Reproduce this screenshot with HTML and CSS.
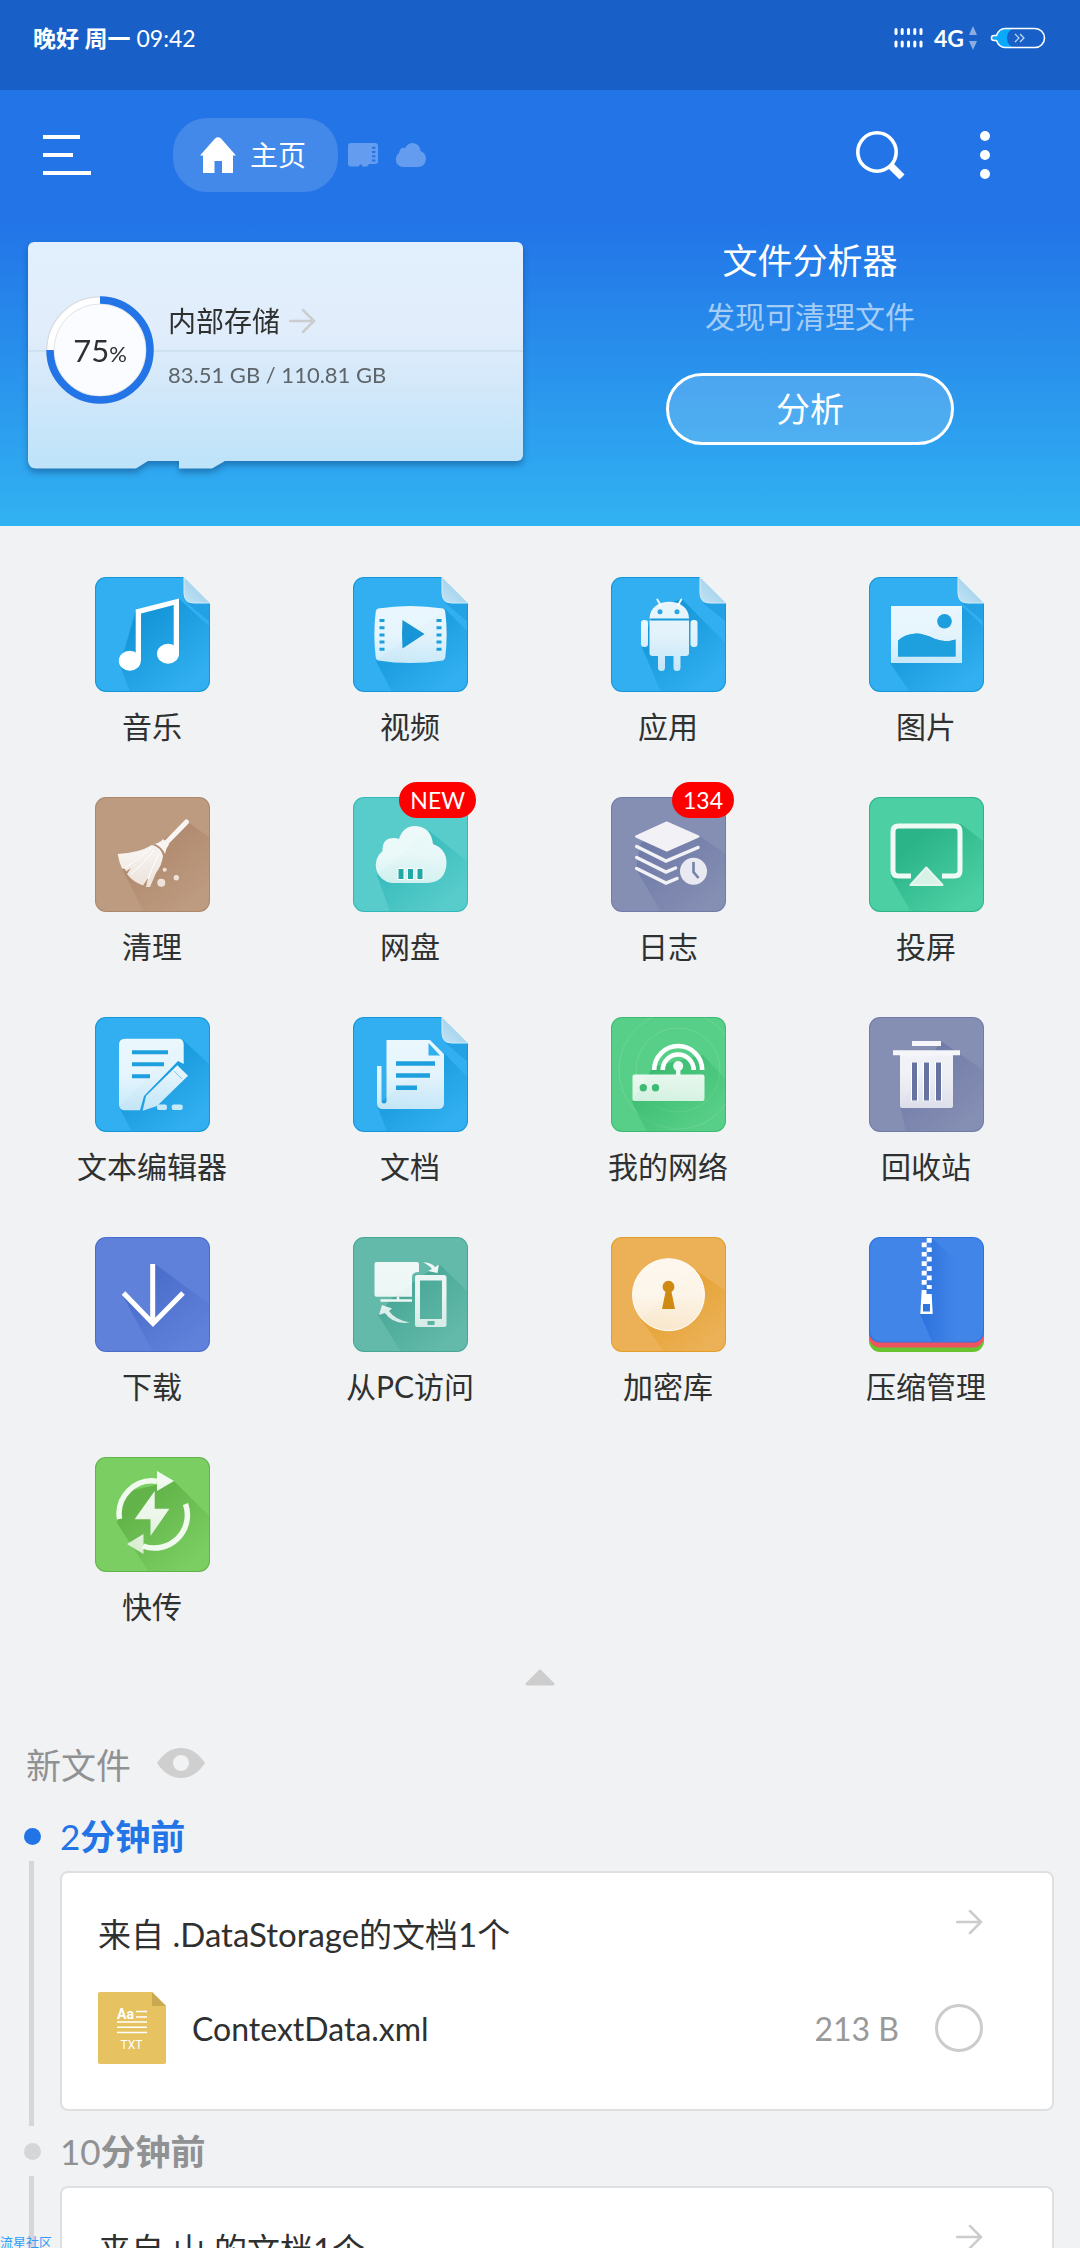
FILE: index.html
```html
<!DOCTYPE html>
<html lang="zh-CN">
<head>
    <meta charset="UTF-8">
    <meta name="viewport" content="width=device-width, initial-scale=1.0">
    <title>主页</title>
    <link rel="stylesheet" href="styles.css">
</head>
<body>
    <!-- Shared icon parts -->
    <svg class="defs" width="0" height="0" aria-hidden="true">
        <defs>
            <linearGradient id="fade-grad" gradientUnits="userSpaceOnUse" x1="45" y1="45" x2="95" y2="105">
                <stop offset="0" stop-color="#fff"/>
                <stop offset="1" stop-color="#fff" stop-opacity="0"/>
            </linearGradient>
            <mask id="fade" maskUnits="userSpaceOnUse" x="0" y="0" width="115" height="115">
                <rect width="115" height="115" fill="url(#fade-grad)"/>
            </mask>
            <linearGradient id="zip-grad" x1="0" y1="0" x2="1" y2="0">
                <stop offset="0" stop-color="#2c72dd"/>
                <stop offset="1" stop-color="#4285e9"/>
            </linearGradient>
            <clipPath id="tile-clip"><rect width="115" height="115" rx="11"/></clipPath>
            <linearGradient id="glass" gradientUnits="userSpaceOnUse" x1="0" y1="25" x2="0" y2="90">
                <stop offset="0" stop-color="#fff" stop-opacity=".9"/>
                <stop offset=".5" stop-color="#fff" stop-opacity=".88"/>
                <stop offset="1" stop-color="#fff" stop-opacity=".74"/>
            </linearGradient>
            <linearGradient id="fold-grad" x1="0" y1="1" x2="1" y2="0">
                <stop offset="0" stop-color="#c4e3f4"/>
                <stop offset="1" stop-color="#8fc8e8"/>
            </linearGradient>
            <symbol id="tile" viewBox="0 0 115 115">
                <rect width="115" height="115" rx="11" fill="var(--shade)"/>
                <rect x="1" y="1" width="113" height="113" rx="10" fill="currentColor"/>
            </symbol>
            <symbol id="tile-fold" viewBox="0 0 115 115">
                <path d="M11 0H89L115 26V104a11 11 0 0 1-11 11H11a11 11 0 0 1-11-11V11A11 11 0 0 1 11 0z" fill="var(--shade)"/>
                <path d="M11 1H88.600L114 26.400V104a10 10 0 0 1-10 10H11a10 10 0 0 1-10-10V11A10 10 0 0 1 11 1z" fill="currentColor"/>
                <path d="M92 26H114V44z" fill="var(--shade)" opacity=".5"/>
                <path d="M89 0V16q0 10 10 10H115z" fill="url(#fold-grad)" stroke="#d5ecf8" stroke-width="1"/>
            </symbol>
            <symbol id="arrow" viewBox="0 0 27 26">
                <path d="M1 13H25M14 2L25 13L14 24" fill="none" stroke="#cbcccc" stroke-width="2.500" stroke-linecap="round"/>
            </symbol>
        </defs>
    </svg>

    <div class="app">
        <header class="status-bar">
            <span class="clock"><b>晚好 周一</b> 09:42</span>
            <span class="status-icons">
                <svg width="30" height="20" viewBox="0 0 30 20" aria-hidden="true">
                    <path d="M2 1.500v4M8.200 1.500v4M14.500 1.500v4M20.800 1.500v4M27 1.500v4M2 14v4M8.200 14v4M14.500 14v4M20.800 14v4M27 14v4" stroke="#fff" stroke-width="3" stroke-linecap="round"/>
                </svg>
                <span class="network">4G</span>
                <svg class="updown" width="8" height="24" viewBox="0 0 8 24" aria-hidden="true">
                    <path d="M4 0L8 9H0zM4 24L8 15H0z" fill="#8bade2"/>
                </svg>
                <svg width="56" height="22" viewBox="0 0 56 22" aria-hidden="true">
                    <path d="M7 8Q9 2 15 2H22Q17 5 17 11T22 20H15Q9 20 7 14H3V8z" fill="#08a9ff"/>
                    <path d="M6.500 8.500Q9 1.500 15 1.500H45a9.500 9.500 0 0 1 0 19H15Q9 20.500 6.500 13.500H4a2.500 2.500 0 0 1 0-5z" fill="none" stroke="#fff" stroke-width="1.600"/>
                    <path d="M25 7l4 4l-4 4M30 7l4 4l-4 4" fill="none" stroke="#c5dcf8" stroke-width="1.200"/>
                </svg>
            </span>
        </header>

        <section class="hero">
            <nav class="toolbar">
                <button class="icon-btn menu-btn" aria-label="菜单">
                    <svg width="48" height="42" viewBox="0 0 48 42"><path d="M0 3H37M0 21H30M0 39H48" stroke="#fff" stroke-width="4"/></svg>
                </button>
                <a class="home-tab" href="#">
                    <svg width="36" height="36" viewBox="0 0 36 36" aria-hidden="true"><path d="M15 1.500Q18-1 21 1.500L36 18.500H33V36H22V24H14.500V36H3V18.500H0z" fill="#fff"/></svg>
                    <span>主页</span>
                </a>
                <a class="tab-dot" href="#" aria-label="存储卡">
                    <svg width="30" height="24" viewBox="0 0 30 24">
                        <path d="M3 0H27q3 0 3 3V18.500q0 2.500-3 2.500H21L19 23.500H14V21.500H12L10.500 23.500H3q-3 0-3-3V3q0-3 3-3z" fill="#649def"/>
                        <path d="M24 4.800h3.500M24 9h3.500M24 13.200h3.500M24 17.400h3.500" stroke="#2274e7" stroke-width="2"/>
                    </svg>
                </a>
                <a class="tab-dot" href="#" aria-label="网盘">
                    <svg width="30" height="24" viewBox="0 0 30 24"><path d="M7 24a7 7 0 0 1-7-8Q0 12 3 10Q4 4 9 5Q12 0 17 0Q24 1 24.500 8Q30 10 30 16Q29 24 22 24z" fill="#649def"/></svg>
                </a>
                <button class="icon-btn search-btn" aria-label="搜索">
                    <svg width="49" height="48" viewBox="0 0 49 48"><circle cx="21" cy="21" r="19.200" fill="none" stroke="#fff" stroke-width="3.600"/><path d="M34 34L46 46" stroke="#fff" stroke-width="7"/></svg>
                </button>
                <button class="icon-btn more-btn" aria-label="更多">
                    <svg width="10" height="48" viewBox="0 0 10 48"><g fill="#fff"><circle cx="5" cy="5" r="5"/><circle cx="5" cy="24" r="5"/><circle cx="5" cy="43" r="5"/></g></svg>
                </button>
            </nav>

            <div class="hero-body">
                <a class="storage" href="#">
                    <div class="storage-card">
                        <div class="gauge">
                            <svg class="gauge-ring" viewBox="0 0 108 108" aria-hidden="true">
                                <circle cx="54" cy="54" r="53" fill="#fbfcff" stroke="#d8dade" stroke-width="1.500"/>
                                <circle cx="54" cy="54" r="49.500" fill="none" stroke="#fff" stroke-width="6"/>
                                <circle cx="54" cy="54" r="46" fill="none" stroke="#e2e4e6" stroke-width="1"/>
                                <path d="M54 4A50 50 0 1 1 4 54" fill="none" stroke="#2274e7" stroke-width="7.500"/>
                            </svg>
                            <span class="gauge-value">75<small>%</small></span>
                        </div>
                        <div class="storage-info">
                            <p class="storage-name">内部存储 <svg width="27" height="26" aria-hidden="true"><use href="#arrow"/></svg></p>
                            <p class="storage-size">83.51 GB / 110.81 GB</p>
                        </div>
                    </div>
                    <svg class="storage-tabs" width="197" height="8" viewBox="0 0 197 8" aria-hidden="true"><path d="M0 0H120L108 7.500H8Q1 7.500 0 0zM151 0H197L184 7.500H151z" fill="#bfe3f9"/></svg>
                </a>
                <div class="analyzer">
                    <h1>文件分析器</h1>
                    <p>发现可清理文件</p>
                    <button class="analyze-btn">分析</button>
                </div>
            </div>
        </section>

        <!-- Shortcuts -->
        <nav class="shortcuts">
            <a class="shortcut" href="#">
                <svg class="tile blue" viewBox="0 0 115 115" aria-hidden="true">
                    <use href="#tile-fold"/>
                    <path class="shadow" d="M41 33L84 22L115 50V115H35L25 88z"/>
                    <path d="M40.700 80V32.500L84 21.500V78H78.700V28L46 36.500V84z" fill="#fff"/>
                    <ellipse cx="34.800" cy="83.700" rx="11" ry="10" fill="#fff"/><ellipse cx="73" cy="76.700" rx="11" ry="10" fill="#fff"/>
                </svg>
                <span>音乐</span>
            </a>
            <a class="shortcut" href="#">
                <svg class="tile blue" viewBox="0 0 115 115" aria-hidden="true">
                    <use href="#tile-fold"/>
                    <path class="shadow" d="M92 32L115 55V115H39L23 84z"/>
                    <path class="glyph" d="M25 31.500Q57 26.500 90 31.500Q92 32 92.300 35Q95 57 92.300 80Q92 83 90 83.500Q57 88.500 25 83.500Q23 83 22.700 80Q20 57 22.700 35Q23 32 25 31.500z"/>
                    <path d="M26.500 43.500h5M26.500 50.700h5M26.500 57.900h5M26.500 65h5M26.500 72.200h5M83.500 43.500h5M83.500 50.700h5M83.500 57.900h5M83.500 65h5M83.500 72.200h5" stroke="#1d9edd" stroke-width="3"/>
                    <path d="M49.500 43L71.500 57L49.500 71.500Q48.500 57 49.500 43z" fill="#1795d6"/>
                </svg>
                <span>视频</span>
            </a>
            <a class="shortcut" href="#">
                <svg class="tile blue" viewBox="0 0 115 115" aria-hidden="true">
                    <use href="#tile-fold"/>
                    <path class="shadow" d="M71 22L115 67V115H50L30 68L45 30z"/>
                    <path d="M46.300 22.500l3.500 6M70.300 22.500l-3.500 6" stroke="#eaf6fd" stroke-width="2" stroke-linecap="round"/>
                    <path class="glyph" d="M38.500 41.500C38.500 19 78 19 78 41.500z"/>
                    <path class="glyph" d="M38.500 43.500H78V76q0 3-3 3H69.500V90.500a3.500 3.500 0 0 1-7 0V79H54V90.500a3.500 3.500 0 0 1-7 0V79H41.500q-3 0-3-3z"/>
                    <rect class="glyph" x="30" y="43" width="7" height="27" rx="3"/><rect class="glyph" x="79.500" y="43" width="7" height="27" rx="3"/>
                    <circle cx="49" cy="34.700" r="2.500" fill="#2aa5e3"/><circle cx="66" cy="34.700" r="2.500" fill="#2aa5e3"/>
                </svg>
                <span>应用</span>
            </a>
            <a class="shortcut" href="#">
                <svg class="tile blue" viewBox="0 0 115 115" aria-hidden="true">
                    <use href="#tile-fold"/>
                    <path class="shadow" d="M93 29L115 50V115H41L21 86z"/>
                    <path class="glyph" fill-rule="evenodd" d="M22 29H93V86H22zM29 63.700V79.500H86.500V62.500Q77 66 66 62Q55 56.500 47 56.500Q36 57 29 63.700z"/>
                    <path d="M29 63.700V79.500H86.500V62.500Q77 66 66 62Q55 56.500 47 56.500Q36 57 29 63.700z" fill="#1fa0de"/>
                    <circle cx="75.500" cy="44.300" r="7.300" fill="#1d9edd"/>
                </svg>
                <span>图片</span>
            </a>

            <a class="shortcut" href="#">
                <svg class="tile brown" viewBox="0 0 115 115" aria-hidden="true">
                    <use href="#tile"/>
                    <path class="shadow" d="M93 25L115 41V115H49L27 72z"/>
                    <path d="M91.500 25L71 46" stroke="#f9f5f3" stroke-width="5" stroke-linecap="round"/>
                    <path d="M60 47Q66 45 68 42L74 47.500Q71 51 70 57Q67 50 60 47z" fill="#f9f5f3"/>
                    <path class="glyph" d="M22.700 57Q44 56 57 48Q66 50 68 59Q67 68 61 76L55 90H51L53 81L48 88.500Q38 85 32 77L36 71L31 74.500L30 72L27 71.500Q24 65 22.700 57z"/>
                    <path d="M30 71Q45 62 56 51M36 77Q50 66 59 53M53 82Q58 68 64 57" stroke="#fff" stroke-width="1" fill="none"/>
                    <circle cx="66.300" cy="85.700" r="4" fill="#eee3dc"/><circle cx="81.300" cy="80.700" r="2.700" fill="#eee3dc"/><circle cx="69.700" cy="72.700" r="2" fill="#eee3dc"/>
                </svg>
                <span>清理</span>
            </a>
            <a class="shortcut" href="#">
                <svg class="tile teal" viewBox="0 0 115 115" aria-hidden="true">
                    <use href="#tile"/>
                    <path class="shadow" d="M76 34L115 65V115H37L24 78z"/>
                    <path class="glyph" d="M39 86A18 18 0 0 1 29.500 54Q29 41 41 41Q44 41 46 42Q50 29 62.500 29Q78 30 80 47Q93.500 52 93.500 66Q93 85 74 86z"/>
                    <path d="M48 71v12M57.500 71v12M67 71v12" stroke="#fff" stroke-width="7"/>
                    <path d="M48 72v10M57.500 72v10M67 72v10" stroke="#1fa8a6" stroke-width="5"/>
                </svg>
                <em class="badge">NEW</em>
                <span>网盘</span>
            </a>
            <a class="shortcut" href="#">
                <svg class="tile slate" viewBox="0 0 115 115" aria-hidden="true">
                    <use href="#tile"/>
                    <path class="shadow" d="M88 39L115 57V115H50L25 72L30 45z"/>
                    <path d="M25 39.500L55.700 25.500L87.500 39.500L55.700 53.500z" fill="#f1f1f6" stroke="#f1f1f6" stroke-width="2" stroke-linejoin="round"/>
                    <path d="M25.700 49.500L55 64L87 50.500M25.700 60.500L55 75L64.500 71M25.700 71.500L55 86L66 81.500" fill="none" stroke="#f1f1f6" stroke-width="3.500" stroke-linecap="round"/>
                    <circle cx="82.500" cy="74.300" r="13.500" fill="#e9e9f1"/>
                    <path d="M82.500 65V75L87.500 81" fill="none" stroke="#7481aa" stroke-width="2.600"/>
                </svg>
                <em class="badge">134</em>
                <span>日志</span>
            </a>
            <a class="shortcut" href="#">
                <svg class="tile green" viewBox="0 0 115 115" aria-hidden="true">
                    <use href="#tile"/>
                    <path class="shadow" d="M92 27L115 45V115H42L22 80L26 30z"/>
                    <path d="M42 79H29.500q-5.500 0-5.500-5.500V34.500q0-5.500 5.500-5.500H85.500q5.500 0 5.500 5.500V73.500q0 5.500-5.500 5.500H73" fill="none" stroke="#effaf5" stroke-width="5"/>
                    <path d="M57.300 70.500L73.500 88H41.500z" fill="#d9f2e7" stroke="#e5f7ef" stroke-width="2" stroke-linejoin="round"/>
                </svg>
                <span>投屏</span>
            </a>

            <a class="shortcut" href="#">
                <svg class="tile blue" viewBox="0 0 115 115" aria-hidden="true">
                    <use href="#tile"/>
                    <path class="shadow" d="M88 23L115 48V115H37L24 90z"/>
                    <path class="glyph" d="M30 21.700H83q5.700 0 5.700 5.700V47L83 44L49 79L45 93.300H30q-6 0-6-6V27.700q0-6 6-6z"/>
                    <path d="M37 35.300H73M37 47.300H69M37 59.300H55" stroke="#1fa0de" stroke-width="4"/>
                    <path class="glyph" d="M47.700 93.700L51 79L82.300 48.300L93 58.700L62 89z"/>
                    <path d="M79 54L87 62" stroke="#7cc7ee" stroke-width="1"/>
                    <rect class="glyph" x="62" y="87.500" width="10" height="5.500" rx="2"/><rect class="glyph" x="76.700" y="87.500" width="11" height="5.500" rx="2"/>
                </svg>
                <span>文本编辑器</span>
            </a>
            <a class="shortcut" href="#">
                <svg class="tile blue" viewBox="0 0 115 115" aria-hidden="true">
                    <use href="#tile-fold"/>
                    <path class="shadow" d="M90 35L115 61V115H34L24 88z"/>
                    <path class="glyph" fill-rule="evenodd" d="M33.500 23H77L91 37V86q0 6-6 6H30q-6 0-6-6V49H28.500V84q0 2.500 2.500 2.500T33.500 84zM75.500 26V38.500H87z"/>
                    <path d="M43 46.500H82M43 58.500H77M43 70.700H64" stroke="#1fa0de" stroke-width="4.600"/>
                </svg>
                <span>文档</span>
            </a>
            <a class="shortcut" href="#">
                <svg class="tile lime" viewBox="0 0 115 115" aria-hidden="true">
                    <use href="#tile"/>
                    <g clip-path="url(#tile-clip)" fill="none" stroke="#fff" stroke-opacity=".13"><circle cx="67" cy="53" r="42"/><circle cx="67" cy="53" r="59"/></g>
                    <path class="shadow" d="M92 38L115 63V115H36L21 85L42 50z"/>
                    <path d="M43.200 53a24 24 0 0 1 48 0M51.700 53a15.500 15.500 0 0 1 31 0" fill="none" stroke="#fff" stroke-width="4.600"/>
                    <circle cx="67.200" cy="49" r="5" fill="#eefaf3"/><path d="M67.200 50V58" stroke="#eefaf3" stroke-width="4.500"/>
                    <rect class="glyph" x="21.500" y="57.500" width="72" height="26.500" rx="2"/>
                    <circle cx="32.300" cy="70.700" r="3.700" fill="#3dbb74"/><circle cx="44.500" cy="70.700" r="3.700" fill="#3dbb74"/>
                </svg>
                <span>我的网络</span>
            </a>
            <a class="shortcut" href="#">
                <svg class="tile slate" viewBox="0 0 115 115" aria-hidden="true">
                    <use href="#tile"/>
                    <path class="shadow" d="M72 24L115 54V115H37L31 88z"/>
                    <path d="M43 26.500H72M24 35.800H91" stroke="#f6f6fa" stroke-width="5"/>
                    <path class="glyph" d="M31 38H84V89q0 2-2 2H33q-2 0-2-2z"/>
                    <path d="M45.500 45V84M57.500 45V84M69.500 45V84" stroke="#fff" stroke-width="7"/>
                    <path d="M45.500 45.500V83.500M57.500 45.500V83.500M69.500 45.500V83.500" stroke="#66729f" stroke-width="5"/>
                </svg>
                <span>回收站</span>
            </a>

            <a class="shortcut" href="#">
                <svg class="tile indigo" viewBox="0 0 115 115" aria-hidden="true">
                    <use href="#tile"/>
                    <path class="shadow" d="M60 27L115 68V115H58L28 59L55 80z"/>
                    <path d="M57.700 27V87M28.500 56L58 86.500L88 56" fill="none" stroke="#fff" stroke-width="5"/>
                </svg>
                <span>下载</span>
            </a>
            <a class="shortcut" href="#">
                <svg class="tile sea" viewBox="0 0 115 115" aria-hidden="true">
                    <use href="#tile"/>
                    <path class="shadow" d="M86 27L115 55V115H48L25 78L40 60z"/>
                    <path class="glyph" d="M23.500 25H64q2 0 2 2V35Q59 35 59 40V59.700H23.500q-2 0-2-2V27q0-2 2-2z"/>
                    <path d="M45 59.700V63M27.500 63.500H59" stroke="#edf7f4" stroke-width="2.500"/>
                    <path class="glyph" fill-rule="evenodd" d="M64.500 38H91q2.500 0 2.500 2.500V87.500q0 2.500-2.500 2.500H64.500q-2.500 0-2.500-2.500V40.500q0-2.500 2.500-2.500zM67 43.500V82H89V43.500zM74.500 84V88H81.500V84z"/>
                    <path class="glyph" d="M70 25.500Q78 25 82 30L86 27.500L84.500 36L75 34L79 32Q76 28 70 25.500zM57 85.500Q40 88 32 76L26 78L29 68L39 71.500L36 74Q42 83 57 85.500z"/>
                </svg>
                <span>从PC访问</span>
            </a>
            <a class="shortcut" href="#">
                <svg class="tile orange" viewBox="0 0 115 115" aria-hidden="true">
                    <use href="#tile"/>
                    <path class="shadow" d="M84 33L115 54V115H53L30 82z"/>
                    <circle class="glyph" cx="57.500" cy="57.700" r="36" stroke="#fff" stroke-width="1"/>
                    <path d="M54.500 55A6 6 0 1 1 60.500 55L64 72H51z" fill="#cf8a14"/>
                </svg>
                <span>加密库</span>
            </a>
            <a class="shortcut" href="#">
                <svg class="tile royal" viewBox="0 0 115 115" aria-hidden="true">
                    <rect y="80" width="115" height="35" rx="11" fill="#69c22f"/>
                    <rect y="75" width="115" height="35.500" rx="11" fill="#ef5261"/>
                    <rect width="115" height="105.500" rx="11" fill="#2c72dd"/>
                    <rect x="1" y="1" width="113" height="103.500" rx="10" fill="#4285e9"/>
                    <path d="M63 1L88 24V104.500H63L51 77z" fill="url(#zip-grad)"/>
                    <path d="M60.200 1V52" stroke="#fff" stroke-width="5" stroke-dasharray="4.700 4.700"/>
                    <path d="M55.200 5.500V52" stroke="#fff" stroke-width="5" stroke-dasharray="4.700 4.700"/>
                    <path fill-rule="evenodd" d="M52.700 53H57.500V57H62.700L63.700 77H51.300zM54 67V74.500H61V67z" fill="#fff"/>
                </svg>
                <span>压缩管理</span>
            </a>

            <a class="shortcut" href="#">
                <svg class="tile grass" viewBox="0 0 115 115" aria-hidden="true">
                    <use href="#tile"/>
                    <path class="shadow" d="M79 24L115 60V115H54L22 66L30 35z"/>
                    <path d="M24.500 62A33 33 0 0 1 62 24.200M90.500 47A33 33 0 0 1 48 89" fill="none" stroke="#f1faee" stroke-width="5.500"/>
                    <path class="glyph" d="M62 14L79 24L62 34zM48.500 77L32 87L48.500 97zM59.700 34V51.700H74.400L55.500 79V62.300H39.600z"/>
                </svg>
                <span>快传</span>
            </a>
        </nav>

        <button class="collapse-btn" aria-label="收起">
            <svg width="30" height="17" viewBox="0 0 30 17"><path d="M15 2L28 15H2z" fill="#cdcdcd" stroke="#cdcdcd" stroke-width="3" stroke-linejoin="round"/></svg>
        </button>

        <!-- Recent files -->
        <section class="recent">
            <div class="recent-title">
                <h2>新文件</h2>
                <button class="icon-btn" aria-label="显示">
                    <svg width="48" height="30" viewBox="0 0 48 30"><path fill-rule="evenodd" d="M0 15Q10 0 24 0T48 15Q38 30 24 30T0 15zM24 7a8 8 0 1 0 0 16a8 8 0 1 0 0-16z" fill="#cfcfcf"/></svg>
                </button>
            </div>

            <article class="entry entry-latest">
                <i class="dot"></i>
                <h3>2<b>分钟前</b></h3>
                <i class="line"></i>
                <div class="card">
                    <a class="card-head" href="#">
                        <span>来自 .DataStorage的文档1个</span>
                        <svg width="27" height="26" aria-hidden="true"><use href="#arrow"/></svg>
                    </a>
                    <div class="file">
                        <svg width="68" height="72" viewBox="0 0 68 72" aria-hidden="true">
                            <path d="M2 0H54L68 14V70q0 2-2 2H2q-2 0-2-2V2Q0 0 2 0z" fill="#e6c360"/>
                            <path d="M54 0L68 14H54z" fill="#c9a951"/>
                            <text class="type-aa" x="19" y="27">Aa</text>
                            <path d="M38 19.500H49M38 25H49M19 30H49M19 35.300H49M19 40.500H49" stroke="#fff" stroke-width="1.500"/>
                            <text class="type-ext" x="33.500" y="57">TXT</text>
                        </svg>
                        <label for="file-1">ContextData.xml</label>
                        <span class="size">213 B</span>
                        <input type="checkbox" id="file-1">
                    </div>
                </div>
            </article>

            <article class="entry">
                <i class="dot"></i>
                <h3>10<b>分钟前</b></h3>
                <i class="line"></i>
                <div class="card">
                    <a class="card-head" href="#">
                        <span>来自 山 的文档1个</span>
                        <svg width="27" height="26" aria-hidden="true"><use href="#arrow"/></svg>
                    </a>
                </div>
            </article>
        </section>

        <div class="watermark">流星社区</div>
    </div>
</body>
</html>
```
FILE: styles.css
```css
* {
    box-sizing: border-box;
}

body {
    margin: 0;
    background-color: #f0f2f4;
    color: #2f3030;
    font-family: Lato, "Noto Sans CJK SC", sans-serif;
}

h1, h2, h3, p {
    margin: 0;
    font-weight: 400;
}

a {
    color: inherit;
    text-decoration: none;
}

button {
    padding: 0;
    border: none;
    background: none;
    font-family: inherit;
    cursor: pointer;
}

svg {
    display: block;
}

.defs {
    position: absolute;
}

.app {
    position: relative;
    height: 100vh;
    overflow: hidden;
}

/* Status bar */
.status-bar {
    display: flex;
    justify-content: space-between;
    height: 90px;
    padding: 23px 34px 0 33px;
    background-color: #1860c8;
    color: #fff;
    font-size: 23px;
    line-height: 30px;
}

.clock b {
    font-weight: 700;
}

.status-icons {
    display: flex;
    align-items: center;
    height: 30px;
}

.network {
    margin-left: 10px;
    font-size: 23px;
    font-weight: 700;
}

.updown {
    margin: 0 13px 0 5px;
}

/* Blue top area */
.hero {
    background: linear-gradient(#2274e7 0, #2274e7 130px, #31b2f2 100%);
    color: #fff;
}

.toolbar {
    display: flex;
    align-items: center;
    height: 132px;
    padding: 0 90px 2px 43px;
}

.home-tab {
    display: flex;
    align-items: center;
    gap: 14px;
    height: 74px;
    margin: 0 10px 0 82px;
    padding: 0 32px 0 27px;
    border-radius: 34px;
    background-color: #4389e9;
    font-size: 28px;
    line-height: 38px;
}

.tab-dot {
    margin-right: 18px;
}

.search-btn {
    margin-left: auto;
}

.more-btn {
    margin-left: 75px;
}

.hero-body {
    display: grid;
    grid-template-columns: 1fr 1fr;
    padding: 20px 0 57px;
}

.storage {
    margin: 0 17px 0 28px;
    filter: drop-shadow(0 4px 3px rgba(10, 60, 110, 0.45));
}

.storage-card {
    display: flex;
    align-items: center;
    gap: 14px;
    height: 219px;
    padding: 0 0 4px 18px;
    border-radius: 6px 6px 6px 0;
    background: linear-gradient(transparent 108px, #cfe0ef 108px, #cfe0ef 110px, transparent 110px),
        linear-gradient(#e2effc 0, #e1edfb 40%, #d9eafa 55%, #bfe3f9 100%);
}

.gauge {
    display: grid;
    width: 108px;
    height: 108px;
    place-items: center;
}

.gauge-ring, .gauge-value {
    grid-area: 1 / 1;
}

.gauge-value {
    color: #2f3030;
    font-size: 31px;
}

.gauge-value small {
    font-size: 22px;
}

.storage-info {
    padding-bottom: 4px;
}

.storage-name {
    display: flex;
    align-items: center;
    gap: 9px;
    color: #2f3030;
    font-size: 28px;
    line-height: 54px;
}

.storage-size {
    color: #5d6569;
    font-size: 22px;
    line-height: 54px;
}

.analyzer {
    display: flex;
    flex-direction: column;
    align-items: center;
}

.analyzer h1 {
    font-size: 35px;
    line-height: 36px;
}

.analyzer p {
    margin-top: 19px;
    color: #a5cdf6;
    font-size: 30px;
    line-height: 38px;
}

.analyze-btn {
    width: 288px;
    height: 72px;
    margin-top: 38px;
    border: 3px solid #fff;
    border-radius: 36px;
    background-color: rgba(255, 255, 255, 0.16);
    color: #fff;
    font-size: 34px;
    line-height: 38px;
}

/* Shortcut grid */
.shortcuts {
    display: grid;
    grid-template-columns: repeat(4, 1fr);
    row-gap: 50px;
    padding: 51px 25px 0 23px;
}

.shortcut {
    position: relative;
    display: flex;
    flex-direction: column;
    align-items: center;
    gap: 14px;
    padding-bottom: 1px;
    font-size: 30px;
    line-height: 40px;
}

.tile {
    width: 115px;
    height: 115px;
}

.tile .shadow {
    fill: var(--shade);
    mask: url(#fade);
    clip-path: url(#tile-clip);
}

.tile .glyph {
    fill: url(#glass);
}

.blue { color: #31aff0; --shade: #1496d8; }
.brown { color: #bd9b80; --shade: #ae876b; }
.teal { color: #58cccb; --shade: #32b9b9; }
.slate { color: #858eb3; --shade: #707ca8; }
.green { color: #4bcfa3; --shade: #2bb488; }
.lime { color: #58cf88; --shade: #3bbb70; }
.indigo { color: #6081da; --shade: #4a6dcb; }
.sea { color: #63baaa; --shade: #47a695; }
.orange { color: #ecb156; --shade: #e39e2a; }
.royal { color: #4285e9; --shade: #2c72dd; }
.grass { color: #7bce62; --shade: #62b349; }

.badge {
    position: absolute;
    top: -15px;
    right: calc(50% - 66px);
    padding: 0 11px;
    border-radius: 18px;
    background-color: #f00;
    color: #fff;
    font-size: 23px;
    font-style: normal;
    line-height: 36px;
}

.collapse-btn {
    display: flex;
    justify-content: center;
    width: 100%;
    height: 90px;
    padding-top: 42px;
}

/* Recent files */
.recent {
    padding-right: 26px;
}

.recent-title {
    display: flex;
    align-items: center;
    gap: 26px;
    height: 94px;
    padding: 0 0 2px 26px;
    color: #909192;
}

.recent-title h2 {
    font-size: 35px;
}

.entry {
    display: grid;
    grid-template-columns: 60px 1fr;
    grid-template-rows: 50px auto;
    align-items: center;
}

.entry h3 {
    color: #909192;
    font-size: 35px;
    line-height: 50px;
}

.entry h3 b {
    font-weight: 700;
}

.entry-latest h3 {
    color: #2274e7;
}

.dot {
    width: 17px;
    height: 17px;
    margin-left: 24px;
    border-radius: 50%;
    background-color: #d5d6d8;
}

.entry-latest .dot {
    background-color: #2274e7;
}

.line {
    width: 5px;
    height: 100%;
    margin-left: 29px;
    background-color: #d5d6d8;
}

.card {
    min-height: 240px;
    margin: 10px 0 15px;
    padding: 36px 69px 45px 36px;
    border: 2px solid #dddfe1;
    border-radius: 8px;
    background-color: #fff;
}

.card-head {
    display: flex;
    align-items: flex-start;
    justify-content: space-between;
    font-size: 33px;
    line-height: 50px;
}

.file {
    display: flex;
    align-items: center;
    margin-top: 33px;
    font-size: 32px;
}

.file label {
    flex: 1;
    margin-left: 26px;
}

.size {
    color: #999;
}

.file input {
    width: 48px;
    height: 48px;
    margin: 0 0 0 36px;
    border: 3px solid #ccc;
    border-radius: 50%;
    appearance: none;
}

.type-aa {
    fill: #fff;
    font: 700 14px Roboto, sans-serif;
}

.type-ext {
    fill: #fff;
    font: 12px Roboto, sans-serif;
    text-anchor: middle;
}

.watermark {
    position: absolute;
    bottom: -3px;
    left: 0;
    color: #2f9df5;
    font-size: 13px;
    line-height: 18px;
}
```
